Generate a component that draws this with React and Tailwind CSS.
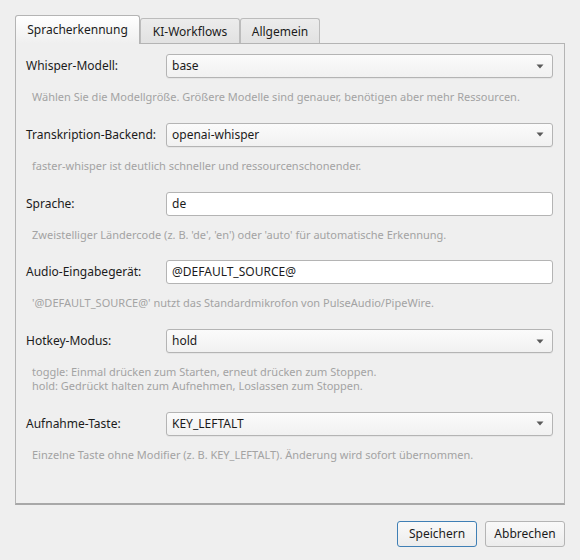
import React, { useState } from 'react';

const tabs = ['Spracherkennung', 'KI-Workflows', 'Allgemein'];

const fields = [
  {
    label: 'Whisper-Modell:',
    kind: 'combo',
    value: 'base',
    hint: ['Wählen Sie die Modellgröße. Größere Modelle sind genauer, benötigen aber mehr Ressourcen.'],
  },
  {
    label: 'Transkription-Backend:',
    kind: 'combo',
    value: 'openai-whisper',
    hint: ['faster-whisper ist deutlich schneller und ressourcenschonender.'],
  },
  {
    label: 'Sprache:',
    kind: 'input',
    value: 'de',
    hint: ["Zweistelliger Ländercode (z. B. 'de', 'en') oder 'auto' für automatische Erkennung."],
  },
  {
    label: 'Audio-Eingabegerät:',
    kind: 'input',
    value: '@DEFAULT_SOURCE@',
    hint: ["'@DEFAULT_SOURCE@' nutzt das Standardmikrofon von PulseAudio/PipeWire."],
  },
  {
    label: 'Hotkey-Modus:',
    kind: 'combo',
    value: 'hold',
    hint: [
      'toggle: Einmal drücken zum Starten, erneut drücken zum Stoppen.',
      'hold: Gedrückt halten zum Aufnehmen, Loslassen zum Stoppen.',
    ],
  },
  {
    label: 'Aufnahme-Taste:',
    kind: 'combo',
    value: 'KEY_LEFTALT',
    hint: ['Einzelne Taste ohne Modifier (z. B. KEY_LEFTALT). Änderung wird sofort übernommen.'],
  },
];

function ComboBox({ value }) {
  return (
    <div className="flex-1 h-[24px] flex items-center justify-between pl-[5px] pr-[8px] rounded-[3px] border border-[#b4b4b4] bg-gradient-to-b from-[#fbfbfb] to-[#f1f1f1] shadow-[0_1px_0_rgba(0,0,0,0.04)]">
      <span className="text-[12px] text-[#1b1b1b]">{value}</span>
      <svg width="8" height="5" viewBox="0 0 8 5">
        <path d="M0.5 0.5 L7.5 0.5 L4 4.5 Z" fill="#5a5a5a" />
      </svg>
    </div>
  );
}

function LineEdit({ value }) {
  return (
    <div className="flex-1 h-[24px] flex items-center pl-[5px] rounded-[3px] border border-[#b4b4b4] bg-white">
      <span className="text-[12px] text-[#1b1b1b]">{value}</span>
    </div>
  );
}

export default function App() {
  const [active, setActive] = useState(0);

  return (
    <div
      className="w-[580px] h-[560px] bg-[#efefef] px-[15px] pt-[15px] text-[#1b1b1b]"
      style={{ fontFamily: '"Noto Sans", "Open Sans", sans-serif' }}
    >
      {/* tab bar */}
      <div className="flex items-end h-[28px]">
        {tabs.map((t, i) =>
          i === active ? (
            <button
              key={t}
              onClick={() => setActive(i)}
              className="relative z-10 h-[29px] -mb-px w-[125px] text-[12px] text-[#1b1b1b] border border-b-0 border-[#b4b4b4] rounded-t-[3px] bg-gradient-to-b from-white to-[#efefef]"
            >
              {t}
            </button>
          ) : (
            <button
              key={t}
              onClick={() => setActive(i)}
              className={`h-[25px] pt-[2px] text-[12px] text-[#1b1b1b] border border-b-0 border-[#bcbcbc] rounded-t-[3px] bg-gradient-to-b from-[#ececec] to-[#e2e2e2] ${
                i === 1 ? 'w-[100px]' : 'w-[80px]'
              }`}
            >
              {t}
            </button>
          )
        )}
      </div>

      {/* page */}
      <div className="h-[462px] border border-[#b4b4b4] border-b-[#a8a8a8] border-b-2 bg-[#efefef] pl-[10px] pr-[11px] pt-[10px] flex flex-col gap-[18.75px]">
        {fields.map((f) => (
          <div key={f.label} className="flex flex-col">
            <div className="flex items-center">
              <div className="w-[140px] whitespace-nowrap text-[12px]">{f.label}</div>
              {f.kind === 'combo' ? <ComboBox value={f.value} /> : <LineEdit value={f.value} />}
            </div>
            <div className="mt-[12px] pl-[6px] text-[11px] leading-[14px] text-[#a3a3a3]">
              {f.hint.map((line) => (
                <div key={line}>{line}</div>
              ))}
            </div>
          </div>
        ))}
      </div>

      {/* dialog buttons */}
      <div className="flex justify-end gap-[8px] mt-[16px]">
        <button className="w-[80px] h-[26px] text-[12px] rounded-[3px] border border-[#3f7fb5] bg-gradient-to-b from-[#f9f9f9] to-[#ececec]">
          Speichern
        </button>
        <button className="w-[80px] h-[26px] text-[12px] rounded-[3px] border border-[#b4b4b4] bg-gradient-to-b from-[#f9f9f9] to-[#ececec]">
          Abbrechen
        </button>
      </div>
    </div>
  );
}
